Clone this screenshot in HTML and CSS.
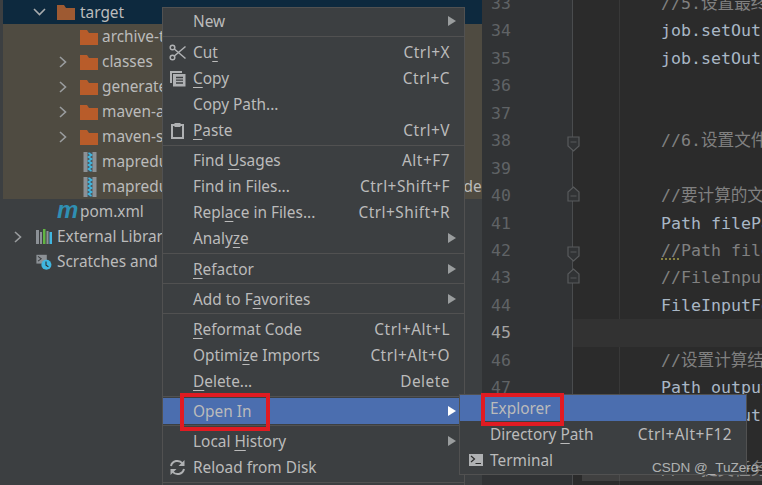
FILE: index.html
```html
<!DOCTYPE html>
<html lang="en">
<head>
<meta charset="utf-8">
<title>IDE context menu</title>
<link rel="stylesheet" href="styles.css">
</head>
<body>
<svg class="defs" width="0" height="0" aria-hidden="true">
  <defs>
    <symbol id="folder" viewBox="0 0 18 16"><path d="M0 1h7l2 3h9v12H0z" fill="currentColor"/></symbol>
    <symbol id="right" viewBox="0 0 17 16"><path d="M6 3l5.500 5L6 13" fill="none" stroke="#9a9d9f" stroke-width="1.600"/></symbol>
    <symbol id="down" viewBox="0 0 17 16"><path d="M3 5l5.500 5.500L14 5" fill="none" stroke="#a8abad" stroke-width="1.600"/></symbol>
    <symbol id="jar" viewBox="0 0 14 20"><rect x="0" y="0" width="13" height="20" fill="#8c9196"/><rect x="4" y="0" width="5" height="20" fill="#4a5459"/><path d="M5 1l3 2-3 2 3 2-3 2 3 2-3 2 3 2-3 2 3 2" fill="none" stroke="#40b6e0" stroke-width="1.600"/></symbol>
    <symbol id="tri" viewBox="0 0 8 10"><path d="M0 0l8 5-8 5z" fill="currentColor"/></symbol>
    <symbol id="fold-end-i" viewBox="0 0 13 16"><path d="M1 1h11v9l-5.500 5L1 10zM3.500 6h6" fill="#313335" stroke="#585a5c" stroke-width="1.200"/></symbol>
    <symbol id="fold-start-i" viewBox="0 0 13 16"><path d="M1 15h11V6L6.500 1 1 6zM3.500 10h6" fill="#313335" stroke="#585a5c" stroke-width="1.200"/></symbol>
  </defs>
</svg>

<div class="app">
  <aside class="tree">
    <div class="row selected l2"><svg class="chev"><use href="#down"/></svg><svg class="ico folder dim"><use href="#folder"/></svg><span class="name">target</span></div>
    <div class="excluded">
      <div class="row l3"><span class="chev"></span><svg class="ico folder"><use href="#folder"/></svg><span class="name">archive-tmp</span></div>
      <div class="row l3"><svg class="chev"><use href="#right"/></svg><svg class="ico folder"><use href="#folder"/></svg><span class="name">classes</span></div>
      <div class="row l3"><svg class="chev"><use href="#right"/></svg><svg class="ico folder"><use href="#folder"/></svg><span class="name">generated-sources</span></div>
      <div class="row l3"><svg class="chev"><use href="#right"/></svg><svg class="ico folder"><use href="#folder"/></svg><span class="name">maven-archiver</span></div>
      <div class="row l3"><svg class="chev"><use href="#right"/></svg><svg class="ico folder"><use href="#folder"/></svg><span class="name">maven-status</span></div>
      <div class="row l3"><span class="chev"></span><svg class="ico jar"><use href="#jar"/></svg><span class="name">mapreduce-1.0-SNAPSHOT.jar</span></div>
      <div class="row l3"><span class="chev"></span><svg class="ico jar"><use href="#jar"/></svg><span class="name">mapreduce-tests-demo01-1.0-SNAPSHOT-jar-with-dependencies.jar</span></div>
    </div>
    <div class="row l2"><span class="chev"></span><span class="ico maven">m</span><span class="name">pom.xml</span></div>
    <div class="row l1"><svg class="chev"><use href="#right"/></svg>
      <svg class="ico" viewBox="0 0 18 16"><rect x="1" y="1" width="3" height="14" fill="#8c9196"/><rect x="5" y="3" width="2" height="12" fill="#8c9196"/><rect x="8" y="0" width="2.500" height="15" fill="#62b543"/><rect x="11.500" y="2" width="2" height="13" fill="#8c9196"/><rect x="14.500" y="3" width="2.500" height="12" fill="#40b6e0"/></svg>
      <span class="name">External Libraries</span></div>
    <div class="row l1"><span class="chev"></span>
      <svg class="ico" viewBox="0 0 19 20"><rect x="0" y="1" width="13" height="11" fill="#8c9196"/><path d="M2 3l4 3-4 3" fill="none" stroke="#3c3f41" stroke-width="1.300"/><circle cx="12.500" cy="13.500" r="6.300" fill="#40b6e0"/><path d="M12 9.500v4.500l3 2" fill="none" stroke="#2b2b2b" stroke-width="1.300"/></svg>
      <span class="name">Scratches and Consoles</span></div>
  </aside>

  <div class="gutter">
    <div class="num">33</div>
    <div class="num">34</div>
    <div class="num">35</div>
    <div class="num">36</div>
    <div class="num">37</div>
    <div class="num">38<svg class="fold fold-end"><use href="#fold-end-i"/></svg></div>
    <div class="num">39</div>
    <div class="num">40<svg class="fold fold-start"><use href="#fold-start-i"/></svg></div>
    <div class="num">41</div>
    <div class="num">42<svg class="fold fold-end"><use href="#fold-end-i"/></svg></div>
    <div class="num">43<svg class="fold fold-start"><use href="#fold-start-i"/></svg></div>
    <div class="num">44</div>
    <div class="num now">45</div>
    <div class="num">46</div>
    <div class="num">47</div>
    <div class="num">48</div>
    <div class="num">49</div>
    <div class="num">50</div>
  </div>

  <main class="code">
    <div class="line cm">//5.设置最终输出</div>
    <div class="line">job.setOutputKeyClass</div>
    <div class="line">job.setOutputValueClass</div>
    <div class="line"></div>
    <div class="line"></div>
    <div class="line cm">//6.设置文件路径</div>
    <div class="line"></div>
    <div class="line cm">//要计算的文件路径</div>
    <div class="line">Path filePath</div>
    <div class="line cm"><span class="warn">//</span>Path filePath</div>
    <div class="line cm">//FileInputFormat</div>
    <div class="line">FileInputFormat</div>
    <div class="line current"></div>
    <div class="line cm">//设置计算结果路径</div>
    <div class="line">Path outputPath</div>
    <div class="line">job.setOutput</div>
    <div class="line"></div>
    <div class="line cm">//7.提交任务</div>
  </main>
</div>

<div class="band"></div>

<nav class="menu main-menu">
  <div class="item"><span class="lbl">New</span><svg class="arrow"><use href="#tri"/></svg></div>
  <div class="sep wide"></div>
  <div class="item">
    <svg class="mi" viewBox="0 0 17 17"><g fill="none" stroke="#afb1b3" stroke-width="1.500"><circle cx="3.500" cy="3.500" r="2.300"/><circle cx="3.500" cy="13.500" r="2.300"/><path d="M5.300 5L16.500 14.500M5.300 12L16.500 2.500"/></g></svg>
    <span class="lbl">Cu<u>t</u></span><span class="key">Ctrl+X</span></div>
  <div class="item">
    <svg class="mi" viewBox="0 0 17 17"><path d="M1 1h12v2H3v10H1z" fill="#afb1b3"/><path d="M4 4h12.500v12.500H4z" fill="#afb1b3"/><path d="M7 7.500h7M7 10.200h7M7 13h7" stroke="#3c3f41" stroke-width="1.300"/></svg>
    <span class="lbl"><u>C</u>opy</span><span class="key">Ctrl+C</span></div>
  <div class="item"><span class="lbl">Copy Path...</span></div>
  <div class="item">
    <svg class="mi" viewBox="0 0 17 17"><path d="M3 3h11v13H3z" fill="none" stroke="#afb1b3" stroke-width="2"/><rect x="5.500" y="1" width="6" height="4" fill="#afb1b3"/></svg>
    <span class="lbl"><u>P</u>aste</span><span class="key">Ctrl+V</span></div>
  <div class="sep"></div>
  <div class="item"><span class="lbl">Find <u>U</u>sages</span><span class="key">Alt+F7</span></div>
  <div class="item"><span class="lbl">Find in Files...</span><span class="key">Ctrl+Shift+F</span></div>
  <div class="item"><span class="lbl">Repl<u>a</u>ce in Files...</span><span class="key">Ctrl+Shift+R</span></div>
  <div class="item"><span class="lbl">Analy<u>z</u>e</span><svg class="arrow"><use href="#tri"/></svg></div>
  <div class="sep wide"></div>
  <div class="item"><span class="lbl"><u>R</u>efactor</span><svg class="arrow"><use href="#tri"/></svg></div>
  <div class="sep up"></div>
  <div class="item"><span class="lbl">Add to F<u>a</u>vorites</span><svg class="arrow"><use href="#tri"/></svg></div>
  <div class="sep up"></div>
  <div class="item"><span class="lbl"><u>R</u>eformat Code</span><span class="key">Ctrl+Alt+L</span></div>
  <div class="item"><span class="lbl">Optimi<u>z</u>e Imports</span><span class="key">Ctrl+Alt+O</span></div>
  <div class="item"><span class="lbl"><u>D</u>elete...</span><span class="key">Delete</span></div>
  <div class="sep"></div>
  <div class="item active"><span class="lbl">Open In</span><svg class="arrow"><use href="#tri"/></svg></div>
  <div class="sep up"></div>
  <div class="item"><span class="lbl">Local <u>H</u>istory</span><svg class="arrow"><use href="#tri"/></svg></div>
  <div class="item">
    <svg class="mi" viewBox="0 0 17 17"><g fill="none" stroke="#afb1b3" stroke-width="2"><path d="M2 7a6.500 6.500 0 0 1 11.500-2.500"/><path d="M15 10a6.500 6.500 0 0 1-11.500 2.500"/></g><path d="M15.500 1v6h-6zM1.500 16v-6h6z" fill="#afb1b3"/></svg>
    <span class="lbl">Reload from Disk</span></div>
  <div class="sep"></div>
</nav>

<nav class="menu sub-menu">
  <div class="item active"><span class="lbl">Explorer</span></div>
  <div class="item"><span class="lbl">Directory <u>P</u>ath</span><span class="key">Ctrl+Alt+F12</span></div>
  <div class="item">
    <svg class="mi term" viewBox="0 0 14 12"><rect width="14" height="12" fill="#afb1b3"/><path d="M2 2l3.500 3L2 8M6.500 9.500H12" fill="none" stroke="#2b2b2b" stroke-width="1.200"/></svg>
    <span class="lbl">Terminal</span></div>
</nav>

<div class="mark mark-open"></div>
<div class="mark mark-explorer"></div>
<div class="watermark">CSDN @_TuZero 务实</div>
</body>
</html>
```

FILE: styles.css
```css
* { box-sizing: border-box; }
html, body { margin: 0; height: 100%; }
body {
  position: relative;
  width: 762px;
  height: 485px;
  overflow: hidden;
  background: #2b2b2b;
  color: #bbbbbb;
  font-family: "Noto Sans", "Noto Sans CJK SC", sans-serif;
  font-size: 15.400px;
}
.defs { position: absolute; }
.app { display: flex; height: 485px; overflow: hidden; }

/* project tree */
.tree {
  flex: 0 0 482px;
  background: #3c3f41;
  padding-left: 3px;
  overflow: hidden;
}
.row { display: flex; align-items: center; height: 25px; white-space: nowrap; }
.row.selected { height: 24px; background: #0d293e; }
.excluded { background: #4f4b41; }
.l1 { padding-left: 6px; }
.l2 { padding-left: 28px; }
.l3 { padding-left: 51px; }
.chev { flex: 0 0 17px; width: 17px; height: 16px; margin-right: 9px; }
.ico { flex: 0 0 18px; width: 18px; height: 16px; margin-right: 4px; }
.ico.folder { color: #b85c2a; }
.ico.dim { color: #9e5a32; }
.ico.jar { height: 20px; padding-left: 3px; }
.l2 .name { margin-left: 1px; }
.maven {
  height: auto;
  font: italic bold 24px/16px "Liberation Sans", sans-serif;
  color: #2f8fb3;
  margin-top: -4px;
  overflow: visible;
}

/* gutter */
.gutter {
  flex: 0 0 91px;
  margin-top: -10px;
  height: 500px;
  background: #313335;
  border-right: 1px solid #4a4c4e;
  font: 16.500px/27.450px "DejaVu Sans Mono", monospace;
  color: #606366;
}
.num { position: relative; display: flex; height: 27.450px; padding-left: 9px; }
.num.now { color: #a4a3a3; }
.fold { position: absolute; left: 85px; width: 13px; height: 16px; }
.fold-end { top: 9px; }
.fold-start { top: 4px; }

/* code */
.code {
  flex: 1;
  margin-top: -10px;
  height: 500px;
  overflow: hidden;
  background: linear-gradient(#383838, #383838) 46px 0 / 1px 100% no-repeat;
  font: 16.600px/27.450px "DejaVu Sans Mono", "Noto Sans CJK SC", monospace;
  color: #a9b7c6;
}
.line { height: 27.450px; padding-left: 88px; white-space: nowrap; }
.line.cm { color: #808080; }
.line.current { background: #323232; }
.warn { text-decoration: underline dotted #a8a04a; text-underline-offset: 3px; }
.band {
  position: absolute;
  left: 582px;
  right: 0;
  top: 474px;
  height: 7px;
  background: rgba(255, 255, 255, .1);
}

/* menus */
.menu {
  position: absolute;
  background: #3c3f41;
  border: 1px solid #515151;
}
.main-menu { left: 162px; top: 7px; width: 303px; height: 490px; }
.sub-menu { left: 459px; top: 394px; width: 288px; height: 81px; }
.item { position: relative; display: flex; align-items: center; height: 26px; padding: 0 14px 0 30px; white-space: nowrap; }
.item.active { background: #4b6eaf; }
.lbl { flex: 1; }
.item u { text-underline-offset: 3px; }
.key { margin-left: 12px; letter-spacing: .5px; }
.arrow { width: 8px; height: 10px; margin-right: -6px; color: #9a9d9e; }
.active .arrow { color: #ffffff; }
.mi { position: absolute; left: 6px; top: 5px; width: 17px; height: 17px; }
.mi.term { left: 9px; top: 7px; width: 14px; height: 12px; }
.sep { height: 1px; margin: 2px 0 1px; background: #515151; }
.sep.wide { margin-bottom: 2px; }
.sep.up { margin: 1px 0 2px; }

/* annotations */
.mark { position: absolute; border: 4px solid #e01b22; }
.mark-open { left: 180px; top: 393px; width: 90px; height: 38px; }
.mark-explorer { left: 481px; top: 393px; width: 83px; height: 33px; }
.watermark {
  position: absolute;
  left: 652px;
  top: 459px;
  font: 13.500px/17px "Liberation Sans", "Noto Sans CJK SC", sans-serif;
  color: rgba(255, 255, 255, .6);
  white-space: nowrap;
}
```
